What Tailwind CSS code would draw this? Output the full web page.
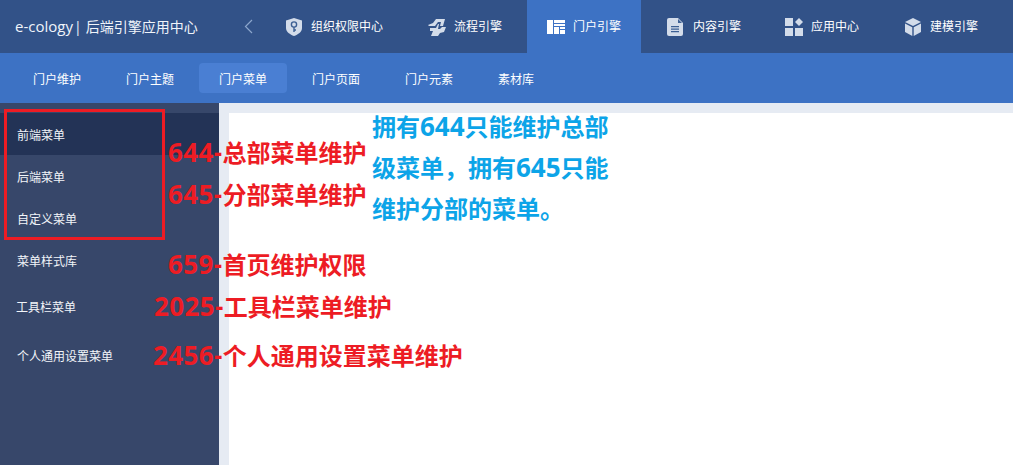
<!DOCTYPE html>
<html lang="zh-CN">
<head>
  <meta charset="UTF-8">
  <title>e-cology 后端引擎应用中心</title>
  <script src="https://cdn.jsdelivr.net/npm/@tailwindcss/browser@4"></script>
</head>
<body class="bg-white font-['Open_Sans','Noto_Sans_CJK_SC',sans-serif]">
  <div class="relative w-[1013px] h-[465px] overflow-hidden flex flex-col">
    <!-- Top bar -->
    <header class="h-[53px] shrink-0 bg-[#325288] flex items-center text-white">
      <div class="w-[244px] pl-[15px] text-[14px] text-[#f0f4fa] whitespace-nowrap"><span class="text-[15px]">e-cology</span><span class="ml-px mr-[4px]">|</span>后端引擎应用中心</div>
      <svg class="w-[9px] h-[15px]" viewBox="0 0 9 15" fill="none" stroke="#8ca6cc" stroke-width="1.2"><path d="M8 1 1.5 7.5 8 14"/></svg>
      <nav class="flex h-full ml-[13px] gap-[5px] text-[12px]">
        <a class="flex items-center h-full px-5">
          <svg class="w-4 h-[18px] mr-[9px]" viewBox="0 0 16 18"><path fill="#d3dcea" d="M8 0 16 2.500V10c0 4-4 6.500-8 8-4-1.500-8-4-8-8V2.500Z"/><circle cx="8" cy="6.500" r="2.600" fill="none" stroke="#3c5f94" stroke-width="1.400"/><path stroke="#3c5f94" stroke-width="1.400" d="M8 9v5M8 12h2"/></svg>
          组织权限中心
        </a>
        <a class="flex items-center h-full px-5">
          <svg class="w-[18px] h-[18px] mr-2" viewBox="0 0 18 18"><path fill="#d3dcea" d="M0 7 5 5 8 1H17L15 8H12L13 4H10L7 8H1Z"/><path fill="#d3dcea" d="M2 10H8L10 6H11L10 11H12L14 9H18L16 14 12 15 10 18H3L5 13H2Z"/></svg>
          流程引擎
        </a>
        <a class="flex items-center h-full px-5 bg-[#3d72c4]">
          <svg class="w-[18px] h-[14px] mr-2" viewBox="0 0 18 14"><path fill="#fff" d="M0 0h6v14H0ZM7 0h11v3H7ZM7 4h11v2H7ZM7 7h5v7H7ZM13 7h5v2h-5ZM13 10h5v4h-5Z"/></svg>
          门户引擎
        </a>
        <a class="flex items-center h-full px-5 ml-px">
          <svg class="w-4 h-[18px] mr-[10px]" viewBox="0 0 16 18"><path fill="#d3dcea" d="M2 0h9l5 5v11a2 2 0 0 1-2 2H2a2 2 0 0 1-2-2V2a2 2 0 0 1 2-2Z"/><path fill="#3c5f94" d="M4 8h8v1.200H4ZM4 10.500h8v1.200H4ZM4 13h8v1.200H4ZM11 1l4 4h-4Z"/></svg>
          内容引擎
        </a>
        <a class="flex items-center h-full px-5 -ml-px">
          <svg class="w-[18px] h-[18px] mr-2" viewBox="0 0 18 18"><path fill="#d3dcea" d="M0 0h8v8H0ZM0 10h8v8H0ZM10 10h8v8h-8ZM14 0l4 4-4 4-4-4Z"/></svg>
          应用中心
        </a>
        <a class="flex items-center h-full px-5 ml-px">
          <svg class="w-4 h-[18px] mr-[9px]" viewBox="0 0 16 18"><path fill="#d3dcea" d="M8 0 16 4 8 8 0 4Z"/><path fill="#d3dcea" d="M0 5.500 7.300 9.200V18L0 14ZM16 5.500 8.700 9.200V18L16 14Z"/></svg>
          建模引擎
        </a>
      </nav>
    </header>

    <!-- Sub nav -->
    <div class="h-[50px] shrink-0 bg-[#3d72c4] flex items-center pl-[13px] gap-[5px] text-[12px] text-white">
      <a class="w-[88px] h-[30px] flex items-center pl-5 pt-[4px] rounded-[4px]">门户维护</a>
      <a class="w-[88px] h-[30px] flex items-center pl-5 pt-[4px] rounded-[4px]">门户主题</a>
      <a class="w-[88px] h-[30px] flex items-center pl-5 pt-[4px] rounded-[4px] bg-[#4a7fd3]">门户菜单</a>
      <a class="w-[88px] h-[30px] flex items-center pl-5 pt-[4px] rounded-[4px]">门户页面</a>
      <a class="w-[88px] h-[30px] flex items-center pl-5 pt-[4px] rounded-[4px]">门户元素</a>
      <a class="w-[88px] h-[30px] flex items-center pl-5 pt-[4px] rounded-[4px]">素材库</a>
    </div>

    <div class="flex-1 flex min-h-0">
      <!-- Sidebar -->
      <aside class="w-[219px] shrink-0 bg-[#37476a] pt-[10px] text-[12px] text-[#f2f5f9]">
        <div class="h-[42px] flex items-center pl-[17px] pt-[3px] bg-[#233356]">前端菜单</div>
        <div class="h-[42px] flex items-center pl-[17px] pt-[3px]">后端菜单</div>
        <div class="h-[42px] flex items-center pl-[17px] pt-[3px]">自定义菜单</div>
        <div class="h-[42px] flex items-center pl-[17px] pt-[3px]">菜单样式库</div>
        <div class="h-[50px] flex items-center pl-[16px] pt-[3px]">工具栏菜单</div>
        <div class="h-[48px] flex items-center pl-[17px] pt-[3px]">个人通用设置菜单</div>
      </aside>
      <!-- Content -->
      <main class="flex-1 bg-[#e6ebf3] pl-[10px] pt-[10px]">
        <div class="h-full bg-white"></div>
      </main>
    </div>

    <!-- Annotations drawn over the page -->
    <div class="absolute left-[4px] top-[109px] w-[161px] h-[131px] border-[3px] border-[#ed1c24]"></div>
    <div class="absolute left-[168px] top-[136px] text-[24px] leading-[32px] font-bold text-[#ed1c24] whitespace-nowrap"><span class="text-[26px] tracking-[0.4px]">644-</span>总部菜单维护</div>
    <div class="absolute left-[168px] top-[178px] text-[24px] leading-[32px] font-bold text-[#ed1c24] whitespace-nowrap"><span class="text-[26px] tracking-[0.4px]">645-</span>分部菜单维护</div>
    <div class="absolute left-[168px] top-[248px] text-[24px] leading-[32px] font-bold text-[#ed1c24] whitespace-nowrap"><span class="text-[26px] tracking-[0.4px]">659-</span>首页维护权限</div>
    <div class="absolute left-[154px] top-[290px] text-[24px] leading-[32px] font-bold text-[#ed1c24] whitespace-nowrap"><span class="text-[26px] tracking-[0.4px]">2025-</span>工具栏菜单维护</div>
    <div class="absolute left-[153px] top-[339px] text-[24px] leading-[32px] font-bold text-[#ed1c24] whitespace-nowrap"><span class="text-[26px] tracking-[0.4px]">2456-</span>个人通用设置菜单维护</div>
    <div class="absolute left-[372px] top-[106px] w-[240px] text-[24px] leading-[41px] font-bold text-[#0ca4e8]">拥有<span class="text-[26px]">644</span>只能维护总部<br>级菜单，拥有<span class="text-[26px]">645</span>只能<br>维护分部的菜单。</div>
  </div>
</body>
</html>
